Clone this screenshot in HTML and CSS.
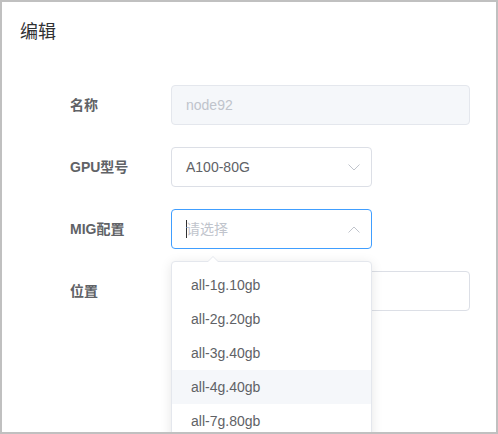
FILE: index.html
```html
<!DOCTYPE html>
<html>
<head>
<meta charset="utf-8">
<link rel="stylesheet" href="styles.css">
</head>
<body>
<div class="dialog">
  <div class="header"><span class="title">编辑</span></div>
  <div class="body">
    <div class="row">
      <label class="label">名称</label>
      <div class="input disabled wide">node92</div>
    </div>
    <div class="row">
      <label class="label">GPU型号</label>
      <div class="input select">
        <span class="value">A100-80G</span>
        <svg class="chev" width="12" height="7" viewBox="0 0 12 7"><polyline points="0.5,0.5 6,6 11.5,0.5" fill="none" stroke="#c0c4cc" stroke-width="1"/></svg>
      </div>
    </div>
    <div class="row">
      <label class="label">MIG配置</label>
      <div class="select-wrap">
        <div class="input select focus">
          <span class="placeholder"><span class="caret"></span>请选择</span>
          <svg class="chev" width="12" height="7" viewBox="0 0 12 7"><polyline points="0.5,6.5 6,1 11.5,6.5" fill="none" stroke="#c0c4cc" stroke-width="1"/></svg>
        </div>
        <div class="dropdown">
          <div class="arrow"></div>
          <ul class="list">
            <li class="item">all-1g.10gb</li>
            <li class="item">all-2g.20gb</li>
            <li class="item">all-3g.40gb</li>
            <li class="item hover">all-4g.40gb</li>
            <li class="item">all-7g.80gb</li>
          </ul>
        </div>
      </div>
    </div>
    <div class="row">
      <label class="label">位置</label>
      <div class="input wide"></div>
    </div>
  </div>
</div>
</body>
</html>
```
FILE: styles.css
```css
* { box-sizing: border-box; }
html, body { margin: 0; padding: 0; background: #fff; }
body {
  font-family: "Liberation Sans", "Noto Sans CJK SC", sans-serif;
  font-size: 14px;
  color: #606266;
}
.dialog {
  width: 498px;
  height: 434px;
  border: 2px solid #c0c0c0;
  overflow: hidden;
  position: relative;
  background: #fff;
}
.header {
  padding: 18px 20px 10px 18px;
}
.title {
  font-size: 18px;
  line-height: 24px;
  color: #303133;
}
.body {
  padding: 31px 20px 0 68px;
}
.row {
  display: flex;
  align-items: flex-start;
  margin-bottom: 22px;
}
.label {
  width: 101px;
  line-height: 40px;
  height: 40px;
  font-weight: bold;
  font-size: 14px;
  color: #606266;
}
.input {
  height: 40px;
  line-height: 38px;
  border: 1px solid #dcdfe6;
  border-radius: 4px;
  padding: 0 14px;
  color: #606266;
  background: #fff;
}
.wide { width: 299px; }
.disabled {
  background: #f5f7fa;
  border-color: #e4e7ed;
  color: #c0c4cc;
}
.select {
  width: 201px;
  display: flex;
  align-items: center;
  justify-content: space-between;
  padding-right: 11px;
}
.focus { border-color: #409eff; }
.placeholder { color: #c0c4cc; display: flex; align-items: center; }
.caret {
  display: inline-block;
  width: 1px;
  height: 18px;
  background: #303133;
  margin-right: -1px;
}
.chev { display: block; }
.select-wrap { position: relative; }
.dropdown {
  position: absolute;
  left: 0;
  top: 52px;
  width: 201px;
  border: 1px solid #e4e7ed;
  border-radius: 4px;
  background: #fff;
  box-shadow: 0 2px 12px rgba(0, 0, 0, 0.1);
  z-index: 10;
}
.arrow {
  position: absolute;
  top: -6px;
  left: 35px;
  width: 0;
  height: 0;
  border-left: 6px solid transparent;
  border-right: 6px solid transparent;
  border-bottom: 6px solid #e4e7ed;
}
.arrow::after {
  content: "";
  position: absolute;
  left: -6px;
  top: 1px;
  border-left: 6px solid transparent;
  border-right: 6px solid transparent;
  border-bottom: 6px solid #fff;
}
.list {
  list-style: none;
  margin: 0;
  padding: 6px 0;
}
.item {
  height: 34px;
  line-height: 34px;
  padding: 0 19px;
  color: #606266;
  font-size: 14px;
}
.item.hover { background: #f5f7fa; }
```
